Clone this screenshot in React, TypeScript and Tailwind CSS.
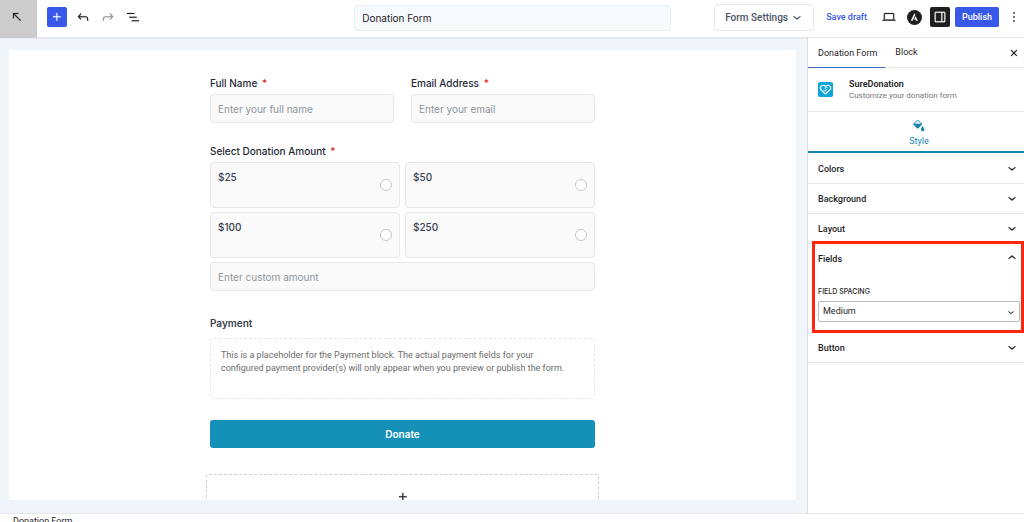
import React from "react";

const icons = {
  arrowUpLeft: "M14 6H6v8h1.5V8.5L17 18l1-1-9.5-9.5H14V6Z",
  plus: "M11 12.5V17.5H12.5V12.5H17.5V11H12.5V6H11V11H6V12.5H11Z",
  undo: "M18.3 11.7c-.6-.6-1.4-.9-2.3-.9H6.7l2.9-3.3-1.1-1-4.5 5L8.5 16l1-1-2.7-2.7H16c.5 0 .9.2 1.3.5 1 1 1 3.4 1 4.5v.3h1.5v-.2c0-1.5 0-4.3-1.5-5.7z",
  redo: "M15.6 6.5l-1.1 1 2.9 3.3H8c-.9 0-1.7.3-2.3.9-1.4 1.5-1.4 4.2-1.4 5.6v.2h1.5v-.3c0-1.1 0-3.5 1-4.5.3-.3.7-.5 1.3-.5h9.2L14.5 15l1.1 1.1 4.6-4.6-4.6-5z",
  list: "M3 6h11v1.5H3V6Zm3.5 5.5h11V13h-11v-1.5ZM21 17H10v1.5h11V17Z",
  chevronDown: "M17.5 11.6L12 16l-5.5-4.4.9-1.2L12 14l4.5-3.6 1 1.2z",
  chevronUp: "M6.5 12.4L12 8l5.5 4.4-.9 1.2L12 10l-4.5 3.6-1-1.2z",
  more: "M13 19h-2v-2h2v2zm0-6h-2v-2h2v2zm0-6h-2V5h2v2z",
  laptop: "M20.5 16h-.7V8c0-1.1-.9-2-2-2H6.2c-1.1 0-2 .9-2 2v8h-.7c-.8 0-1.5.7-1.5 1.5h20c0-.8-.7-1.5-1.5-1.5zM5.7 8c0-.3.2-.5.5-.5h11.6c.3 0 .5.2.5.5v7.6H5.7V8z",
  drawer: "M18 4H6c-1.1 0-2 .9-2 2v12c0 1.1.9 2 2 2h12c1.1 0 2-.9 2-2V6c0-1.1-.9-2-2-2zm-4 14.5H6c-.3 0-.5-.2-.5-.5V6c0-.3.2-.5.5-.5h8v13zm4.5-.5c0 .3-.2.5-.5.5h-2.5v-13H18c.3 0 .5.2.5.5v12z",
  close: "M12 13.06l3.712 3.713 1.061-1.06L13.061 12l3.712-3.712-1.06-1.06L12 10.938 8.288 7.227l-1.061 1.06L10.939 12l-3.712 3.712 1.06 1.061L12 13.061z",
};

function Icon({ name, className = "size-4" }: { name: keyof typeof icons; className?: string }) {
  return (
    <svg viewBox="0 0 24 24" fill="currentColor" stroke="currentColor" strokeWidth="0.3" className={`shrink-0 ${className}`} aria-hidden="true">
      <path d={icons[name]} />
    </svg>
  );
}

function Header() {
  return (
    <header className="flex h-[38px] shrink-0 items-center border-b border-[#e4e6e9] bg-white">
      <button aria-label="Back" className="flex h-[38px] w-[37px] shrink-0 items-center justify-center bg-[#cccccc] pb-1 pr-1">
        <Icon name="arrowUpLeft" />
      </button>
      <div className="ml-[10px] flex items-center pb-[3px]">
        <button aria-label="Add block" className="flex size-5 items-center justify-center rounded-[2px] bg-[#3858e9] text-white">
          <Icon name="plus" />
        </button>
        <button aria-label="Undo" className="ml-2">
          <Icon name="undo" />
        </button>
        <button aria-label="Redo" className="ml-[9px] text-[#949494]">
          <Icon name="redo" />
        </button>
        <button aria-label="Document overview" className="ml-[9px]">
          <Icon name="list" />
        </button>
      </div>
      <input
        aria-label="Form title"
        defaultValue="Donation Form"
        className="mb-[2px] ml-auto mr-[43px] h-[26px] w-[317px] min-w-0 rounded-[4px] border border-[#edf0f2] bg-[#f7fafc] px-[7px] text-[10px] text-[#1e1e1e]"
      />
      <div className="flex shrink-0 items-center pb-[3px] font-['Roboto','Liberation_Sans',sans-serif]">
        <button className="flex h-[27px] w-[100px] items-center justify-between whitespace-nowrap rounded-[4px] border border-[#e5e7eb] pl-[10px] pr-2 text-[10px] font-medium text-[#4b5563]">
          Form Settings
          <Icon name="chevronDown" />
        </button>
        <button className="ml-3 pt-[2px] text-[9px] font-medium text-[#3858e9]">Save draft</button>
        <button aria-label="Preview" className="ml-[14px]">
          <Icon name="laptop" />
        </button>
        <button aria-label="Astra settings" className="ml-[10px]">
          <svg viewBox="0 0 30 30" className="size-[15px]" aria-hidden="true">
            <circle cx="15" cy="15" r="15" fill="#1e1e1e" />
            <path d="M14.8 6.5 7.5 21.5h3.6l5.5-11.3zM17.3 12.5l-3.3 6.6h2.8l1 2.4h3.9z" fill="#fff" />
          </svg>
        </button>
        <button aria-label="Settings" className="ml-2 flex size-5 items-center justify-center rounded-[2px] bg-[#1e1e1e] text-white">
          <Icon name="drawer" />
        </button>
        <button className="ml-[5px] h-5 w-[44px] rounded-[2px] bg-[#3858e9] pt-[2px] text-[9px] font-medium text-white">Publish</button>
        <button aria-label="Options" className="ml-[7px] mr-[2px]">
          <Icon name="more" />
        </button>
      </div>
    </header>
  );
}

function RequiredLabel({ htmlFor, children }: { htmlFor?: string; children: React.ReactNode }) {
  return (
    <label htmlFor={htmlFor} className="mb-1 block text-[10px] font-medium leading-[14px] text-[#1f2937]">
      {children} <span className="ml-[2px] text-[#dc2626]">*</span>
    </label>
  );
}

const fieldClass =
  "block h-[29px] w-full rounded-[4px] border border-[#e5e7e9] bg-[#fafafa] px-[7px] text-[10px] text-[#1f2937] placeholder:text-[#8f949c]";

function DonationForm() {
  return (
    <form className="mx-auto w-[385px]">
      <div className="grid grid-cols-2 gap-[17px]">
        <div>
          <RequiredLabel htmlFor="name">Full Name</RequiredLabel>
          <input id="name" placeholder="Enter your full name" className={fieldClass} />
        </div>
        <div>
          <RequiredLabel htmlFor="email">Email Address</RequiredLabel>
          <input id="email" type="email" placeholder="Enter your email" className={fieldClass} />
        </div>
      </div>
      <div className="mt-[21px]">
        <RequiredLabel htmlFor="custom">Select Donation Amount</RequiredLabel>
        <div className="grid grid-cols-2 gap-x-[5px] gap-y-1">
          {["$25", "$50", "$100", "$250"].map((amount) => (
            <label
              key={amount}
              className="flex h-[46px] items-center justify-between rounded-[4px] border border-[#e5e7e9] bg-[#fafafa] px-[7px] text-[10px] font-medium leading-4 text-[#374151]"
            >
              <span className="mb-4">{amount}</span>
              <input type="radio" name="amount" className="size-3 appearance-none rounded-full border border-[#c3c6cb] bg-white checked:bg-[#1591b7]" />
            </label>
          ))}
        </div>
        <input id="custom" placeholder="Enter custom amount" className={`mt-1 ${fieldClass}`} />
      </div>
      <h2 className="mt-[25px] text-[10px] font-semibold leading-[14px] text-[#374151]">Payment</h2>
      <p className="mt-2 h-[61px] rounded-[4px] border border-dashed border-[#e5e7e9] pl-[10px] pr-5 pt-[10px] font-['Roboto','Liberation_Sans',sans-serif] text-[9px] leading-[13px] text-[#6b6b6b]">
        This is a placeholder for the Payment block. The actual payment fields for your configured payment provider(s) will only appear when you preview or publish the form.
      </p>
      <button type="button" className="mt-[21px] h-7 w-full rounded-[3px] bg-[#1591b7] text-[10px] font-semibold text-white">
        Donate
      </button>
      <button type="button" aria-label="Add block" className="-mx-1 mt-[26px] flex h-[46px] w-[393px] items-center justify-center rounded-[3px] border border-dashed border-[#d0d0d0]">
        <Icon name="plus" />
      </button>
    </form>
  );
}

function Panel({ title, open = false, children }: { title: string; open?: boolean; children?: React.ReactNode }) {
  return (
    <section className="relative border-b border-[#e8e8e8]">
      <button aria-expanded={open} className="flex h-[29px] w-full items-center justify-between pl-[10px] pr-1 text-[9px] font-medium">
        <span className="pt-[2px]">{title}</span>
        <Icon name={open ? "chevronUp" : "chevronDown"} className="mb-px size-4" />
      </button>
      {children}
    </section>
  );
}

function Sidebar() {
  return (
    <aside className="w-[217px] shrink-0 border-l border-[#dddddd] bg-white font-['Roboto','Liberation_Sans',sans-serif]">
      <div className="flex h-[30px] border-b border-[#e8e8e8]">
        <button className="-mb-px border-b border-[#3f68c8] pl-[10px] pr-2 pt-[2px] text-[9px]">Donation Form</button>
        <button className="px-[10px] pt-px text-[9px]">Block</button>
        <button aria-label="Close settings" className="ml-auto mr-[2px]">
          <Icon name="close" />
        </button>
      </div>
      <div className="flex h-11 items-center border-b border-[#e8e8e8] pl-[10px]">
        <svg viewBox="0 0 30 30" className="size-[15px] shrink-0" aria-hidden="true">
          <rect width="30" height="30" rx="4" fill="#0ba5dc" />
          <g fill="none" stroke="#fff" strokeWidth="2.2" strokeLinecap="round" strokeLinejoin="round">
            <path d="M15 24 6 15.500C1.500 9.500 9.500 3 15 9c5.500-6 13.500.5 9 6.500L15 24Z" />
            <path d="M18.500 10.500c-3-1.500-5.500 1-3.500 3s3.500 2 1.500 3.500-4 .5-5-1" strokeWidth="1.800" />
          </g>
        </svg>
        <div className="ml-4">
          <h2 className="text-[9px] font-semibold leading-[11px]">SureDonation</h2>
          <p className="text-[8px] leading-[11px] text-[#757575]">Customize your donation form</p>
        </div>
      </div>
      <button className="flex h-[41px] w-full flex-col items-center justify-center gap-[3px] border-b-2 border-[#1588b0] pl-[6px] pt-[2px] text-[9px] leading-3 text-[#1588b0]">
        <svg viewBox="0 0 36 39" className="h-[13px] w-3" aria-hidden="true">
          <path d="M14 3 26 15 14 27 2 15Z" fill="none" stroke="currentColor" strokeWidth="3" strokeLinejoin="round" />
          <path d="M2 15h24L17 26q-3 3-6 0Z" fill="currentColor" stroke="currentColor" strokeWidth="2" strokeLinejoin="round" />
          <path d="M29 21c3 5 5 7 5 11a5 5 0 0 1-10 0c0-4 2-6 5-11Z" fill="currentColor" />
        </svg>
        Style
      </button>
      <div className="pt-px">
        <Panel title="Colors" />
        <Panel title="Background" />
        <Panel title="Layout" />
        <Panel title="Fields" open>
          <div className="pb-[10px] pl-[10px] pr-1 pt-[14px]">
            <label htmlFor="spacing" className="mb-1 block font-['Inter','Liberation_Sans',sans-serif] text-[7px] font-medium uppercase leading-[10px]">
              Field spacing
            </label>
            <div className="grid items-center">
              <select id="spacing" className="col-start-1 row-start-1 h-[21px] w-full appearance-none rounded-[2px] border border-[#b4b9be] bg-white px-1 pt-px text-[9px]">
                <option>Medium</option>
                <option>Small</option>
                <option>Large</option>
              </select>
              <Icon name="chevronDown" className="pointer-events-none col-start-1 row-start-1 mr-[3px] size-3 justify-self-end" />
            </div>
          </div>
          <div className="pointer-events-none absolute -bottom-px -top-[3px] left-1 right-0 border-[3px] border-[#ff260d]" />
        </Panel>
        <Panel title="Button" />
      </div>
    </aside>
  );
}

export default function App() {
  return (
    <div className="flex h-screen flex-col overflow-hidden bg-white font-['Inter','Liberation_Sans',sans-serif] text-[#1e1e1e]">
      <Header />
      <div className="flex min-h-0 flex-1">
        <main className="flex min-w-0 flex-1 flex-col border-t border-[#e8eaed] bg-[#f0f5fa] pb-[13px] pl-[9px] pr-[11px] pt-[11px]">
          <div className="min-h-0 flex-1 overflow-hidden bg-white pt-[26px]">
            <DonationForm />
          </div>
        </main>
        <Sidebar />
      </div>
      <footer className="h-[9px] shrink-0 border-t border-[#e4e6e9] pl-[13px] font-['Roboto','Liberation_Sans',sans-serif] text-[9px] leading-[15px]">Donation Form</footer>
    </div>
  );
}
